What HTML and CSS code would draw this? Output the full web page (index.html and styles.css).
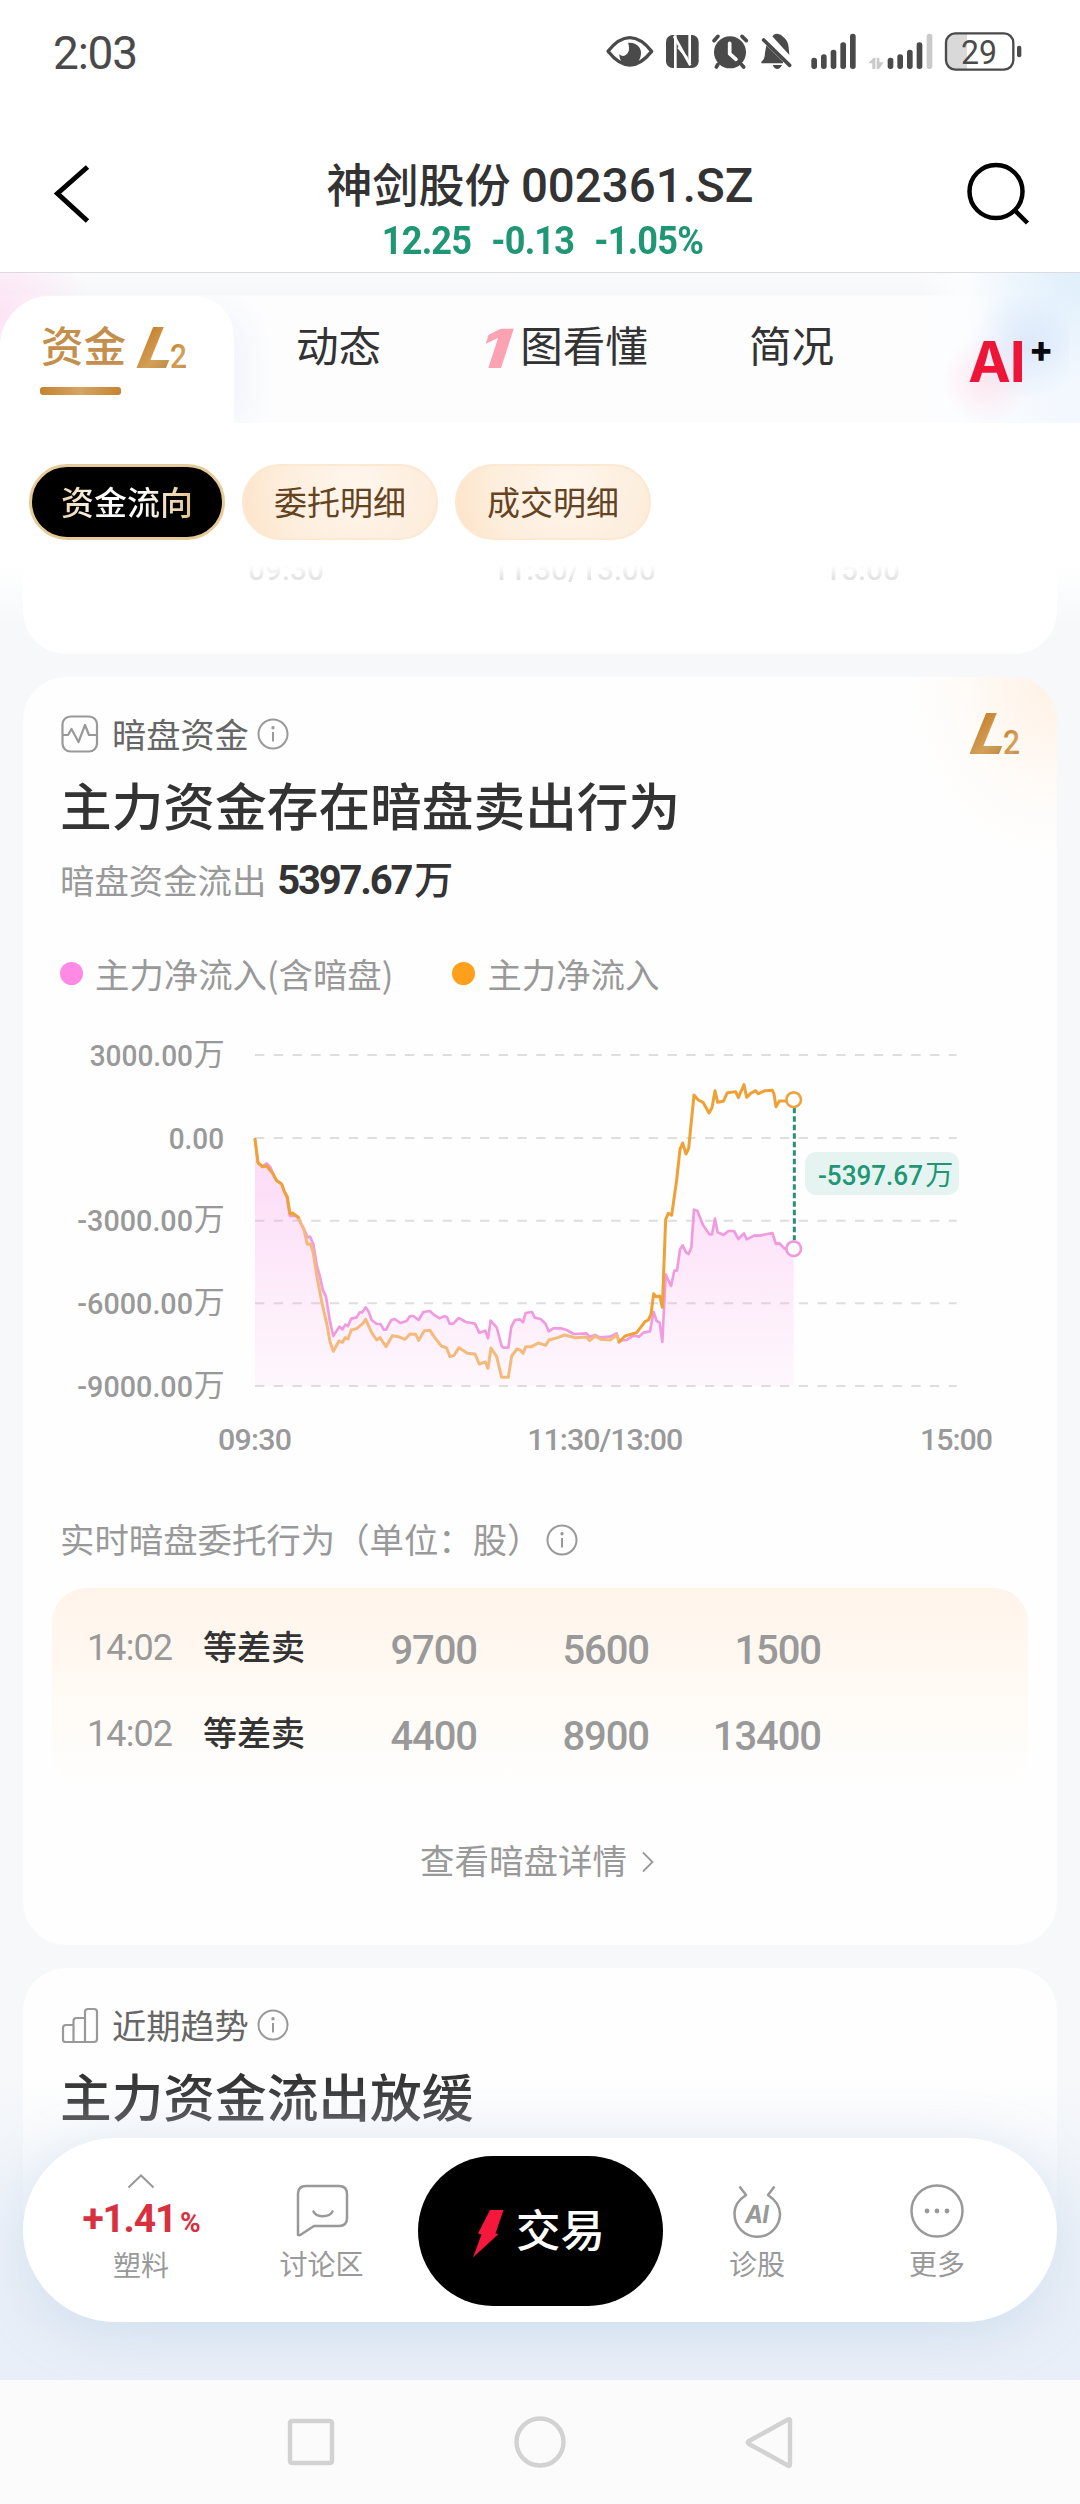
FILE: index.html
```html
<!DOCTYPE html>
<html lang="zh-CN">
<head>
<meta charset="utf-8">
<title>神剑股份 002361.SZ</title>
<link rel="stylesheet" href="styles.css">
</head>
<body>
<svg class="defs" width="0" height="0" aria-hidden="true">
  <defs>
    <linearGradient id="gold" x1="0" y1="0" x2="1" y2="1">
      <stop offset="0" stop-color="#c47a22"/><stop offset=".6" stop-color="#d3a05a"/><stop offset="1" stop-color="#b8843f"/>
    </linearGradient>
    <linearGradient id="area" x1="0" y1="358" x2="0" y2="1098" gradientUnits="userSpaceOnUse">
      <stop offset="0" stop-color="#f98be6" stop-opacity=".32"/><stop offset="1" stop-color="#f98be6" stop-opacity=".06"/>
    </linearGradient>
    <symbol id="l2" viewBox="0 0 54 44">
      <text class="l2-l" transform="translate(-2 42) skewX(-22)" x="0" y="0" textLength="35" lengthAdjust="spacingAndGlyphs" fill="url(#gold)">L</text>
      <text class="l2-2" x="35" y="42" textLength="17" lengthAdjust="spacingAndGlyphs" fill="url(#gold)">2</text>
    </symbol>
    <symbol id="info" viewBox="0 0 32 32">
      <circle cx="16" cy="16" r="14.5" fill="none" stroke="#999" stroke-width="2"/>
      <circle cx="16" cy="9.8" r="1.7" fill="#999"/><path d="M16 14v9.5" stroke="#999" stroke-width="2"/>
    </symbol>
  </defs>
</svg>

<div class="status">
  <span class="clock">2:03</span>
  <svg class="status-icons" viewBox="0 0 1560 270">
    <g fill="none" stroke="#4a4a4a" stroke-width="10">
      <path d="M144 124Q209 42 275 124Q209 206 144 124Z" stroke-linejoin="round"/>
      <g stroke-width="11" stroke-linecap="round"><path d="M462 92l12-13M559 92l-13-13M474 163l-5 8M544 163l7 8"/><path d="M611 90l78 76"/></g>
    </g>
    <g fill="#4a4a4a">
      <path d="M204 98C236 96 247 119 242 138C238 158 222 168 207 167C188 165 178 150 178 133Q188 142 198 134C209 126 209 112 204 98Z"/>
      <rect x="318" y="75" width="98" height="99" rx="20"/>
      <circle cx="510" cy="127" r="48"/>
      <path d="M637 79Q640 72 652 71Q664 73 669 80Q684 90 686 112L688 135ZM619 106L669 155V160H604V155Q614 150 615 128ZM638 165H666Q660 177 652 177Q643 177 638 165Z"/>
      <rect x="754" y="143" width="17" height="34" rx="8"/><rect x="783" y="133" width="17" height="44" rx="8"/><rect x="812" y="119" width="17" height="58" rx="8"/><rect x="841" y="97" width="17" height="80" rx="8"/><rect x="870" y="71" width="17" height="106" rx="8"/>
      <rect x="983" y="143" width="17" height="34" rx="8"/><rect x="1012" y="133" width="17" height="44" rx="8"/><rect x="1041" y="119" width="17" height="58" rx="8"/><rect x="1070" y="97" width="17" height="80" rx="8"/>
      <rect x="1371" y="107" width="13" height="35" rx="6"/>
    </g>
    <g fill="none" stroke="#fff">
      <path d="M346 176V76M389 160V74" stroke-width="8"/><path d="M342 78L391 166" stroke-width="8"/><path d="M354 112L382 144" stroke-width="6"/>
      <path d="M509 100V131L528 148" stroke-width="11" stroke-linecap="round"/>
    </g>
    <g fill="#cacaca"><rect x="1100" y="71" width="17" height="106" rx="8"/><path d="M925 160l16-17h5v34h-9v-17zM950 143h8v14h13l-14 20h-7z"/></g>
    <path d="M1161 90Q1163 72 1186 72H1221V177H1186Q1163 175 1161 155Z" fill="#d9d9d9"/>
    <rect x="1158" y="70" width="202" height="109" rx="28" fill="none" stroke="#4a4a4a" stroke-width="7"/>
    <text class="battery" x="1257" y="161" text-anchor="middle" textLength="108" lengthAdjust="spacingAndGlyphs">29</text>
  </svg>
</div>

<header class="header">
  <svg class="back" viewBox="0 0 44 60"><path d="M37.500 2L7.500 28.500L37.500 56" fill="none" stroke="#000" stroke-width="5"/></svg>
  <div class="heading">
    <h1>神剑股份 <b>002361.SZ</b></h1>
    <div class="quote"><span>12.25</span><span>-0.13</span><span>-1.05%</span></div>
  </div>
  <svg class="search" viewBox="0 0 66 66"><circle cx="29" cy="31.500" r="26.500" fill="none" stroke="#000" stroke-width="4.500"/><path d="M48 50.500L60.500 63" stroke="#000" stroke-width="4.500"/></svg>
</header>

<nav class="tabs">
  <div class="tab active"><span>资金</span><svg class="l2-tab"><use href="#l2"/></svg></div>
  <div class="tab t-news">动态</div>
  <div class="tab t-chart"><svg class="one" viewBox="0 0 34 44"><text class="one-text" transform="translate(-5 42) skewX(-18)" textLength="29" lengthAdjust="spacingAndGlyphs" fill="#fba3b2">1</text></svg>图看懂</div>
  <div class="tab t-brief">简况</div>
  <div class="ai"><span class="ai-word">AI</span><span class="ai-plus">+</span></div>
</nav>

<div class="chips">
  <div class="chip dark"><span>资金流向</span></div>
  <div class="chip">委托明细</div>
  <div class="chip">成交明细</div>
</div>

<main class="feed">
  <section class="prev-card">
    <div class="faded"><span>09:30</span><span>11:30/13:00</span><span>15:00</span></div>
  </section>

  <section class="card dark-pool">
    <svg class="l2-badge"><use href="#l2"/></svg>
    <div class="head">
      <svg class="head-icon" viewBox="0 0 38 38"><rect x="1.500" y="1.500" width="34.500" height="35" rx="8" fill="none" stroke="#999" stroke-width="2.200"/><path d="M2 20h5l3.500-6 7 13 6.500-17 4 10H36" fill="none" stroke="#999" stroke-width="2.200" stroke-linejoin="round"/></svg>
      <span>暗盘资金</span><svg class="info"><use href="#info"/></svg>
    </div>
    <h2>主力资金存在暗盘卖出行为</h2>
    <p class="sub">暗盘资金流出<b>5397.67</b><i>万</i></p>
    <div class="legend"><i class="dot pink"></i><span>主力净流入(含暗盘)</span><i class="dot orange"></i><span>主力净流入</span></div>

    <svg class="chart" viewBox="-510 0 2940 1320">
      <g stroke="#dedede" stroke-width="6" stroke-dasharray="28 28.250">
        <path d="M75 105H2180M75 354H2180M75 602H2180M75 850H2180M75 1098H2180"/>
      </g>
      <path fill="url(#area)" d="M75 358 84 428 97 440 110 430 120 440 137 478 155 492 170 530 180 588 200 588 222 627 233 652 240 650 250 672 260 735 270 770 278 808 288 830 300 905 310 948 318 935 328 920 337 928 346 914 354 918 364 896 380 892 389 877 397 877 407 862 416 875 425 900 440 912 452 912 461 929 468 929 484 900 494 897 511 909 530 903 540 888 550 888 566 900 580 876 600 873 610 883 629 895 645 888 652 893 659 911 670 911 686 894 708 906 735 911 748 938 766 932 774 955 782 902 800 922 815 978 820 983 835 983 844 920 855 900 870 898 879 907 887 879 906 876 914 893 932 897 947 912 956 934 970 925 992 925 1010 930 1031 942 1070 940 1078 950 1095 945 1110 952 1140 950 1160 940 1167 962 1190 960 1210 947 1227 950 1240 938 1260 934 1271 876 1280 903 1289 908 1297 966 1307 763 1323 798 1333 752 1341 752 1350 688 1358 676 1368 697 1376 702 1384 682 1392 569 1402 572 1419 615 1438 643 1446 643 1455 596 1463 637 1481 645 1495 633 1512 633 1525 657 1542 640 1550 658 1574 646 1590 647 1627 639 1638 672 1647 669 1665 687 1691 685V1098H75Z"/>
      <g fill="none" stroke-linejoin="round" stroke-linecap="round">
        <path stroke="#f09ae0" stroke-width="8" d="M75 358 84 428 97 440 110 430 120 440 137 478 155 492 170 530 180 588 200 588 222 627 233 652 240 650 250 672 260 735 270 770 278 808 288 830 300 905 310 948 318 935 328 920 337 928 346 914 354 918 364 896 380 892 389 877 397 877 407 862 416 875 425 900 440 912 452 912 461 929 468 929 484 900 494 897 511 909 530 903 540 888 550 888 566 900 580 876 600 873 610 883 629 895 645 888 652 893 659 911 670 911 686 894 708 906 735 911 748 938 766 932 774 955 782 902 800 922 815 978 820 983 835 983 844 920 855 900 870 898 879 907 887 879 906 876 914 893 932 897 947 912 956 934 970 925 992 925 1010 930 1031 942 1070 940 1078 950 1095 945 1110 952 1140 950 1160 940 1167 962 1190 960 1210 947 1227 950 1240 938 1260 934 1271 876 1280 903 1289 908 1297 966 1307 763 1323 798 1333 752 1341 752 1350 688 1358 676 1368 697 1376 702 1384 682 1392 569 1402 572 1419 615 1438 643 1446 643 1455 596 1463 637 1481 645 1495 633 1512 633 1525 657 1542 640 1550 658 1574 646 1590 647 1627 639 1638 672 1647 669 1665 687 1691 685"/>
        <path stroke="#f4ba7c" stroke-width="9" d="M205 592 222 630 232 673 242 672 250 700 260 765 275 845 290 910 300 965 310 994 327 963 337 967 346 953 354 957 364 930 380 926 398 911 407 898 425 938 440 960 450 953 468 980 487 947 505 950 525 958 540 942 557 943 566 961 583 932 600 931 612 950 634 978 650 984 660 1010 672 1006 687 983 712 1000 735 1002 748 1032 766 1026 774 1045 783 984 800 1010 815 1072 835 1072 845 1008 861 987 870 990 879 1000 887 980 905 980 925 969 947 976 957 960 985 952 1003 945 1035 953 1070 951 1079 962 1095 948 1113 958 1140 960 1160 945 1167 966"/>
        <path stroke="#f0a136" stroke-width="9" d="M75 358 84 428 97 440 110 438 128 460 140 482 155 492 163 515 172 530 180 582 188 579 205 592M1167 966 1185 948 1220 938 1245 905 1255 900 1263 883 1271 821 1278 830 1289 828 1297 862 1307 598 1315 580 1325 586 1340 480 1350 388 1358 369 1368 402 1376 385 1392 225 1405 240 1420 248 1437 279 1446 263 1455 212 1463 247 1480 244 1492 218 1517 215 1525 233 1542 194 1550 232 1562 220 1577 212 1585 221 1605 212 1627 211 1632 222 1638 260 1648 243 1665 243 1691 238"/>
      </g>
      <path d="M1693 263V660" stroke="#2b8f78" stroke-width="9" stroke-dasharray="17 8.500"/>
      <circle cx="1691" cy="239" r="22" fill="#fff" stroke="#eba43f" stroke-width="8"/>
      <circle cx="1691" cy="686" r="22" fill="#fff" stroke="#ee9ae0" stroke-width="8"/>
      <rect x="1725" y="396" width="462" height="129" rx="34" fill="#e5f4f1"/>
      <text class="axis tip" x="1764" y="495" textLength="315" lengthAdjust="spacingAndGlyphs">-5397.67</text><text class="wan tip" x="2086" y="495">万</text>
      <g class="axis">
        <text x="-421" y="137" textLength="310" lengthAdjust="spacingAndGlyphs">3000.00</text><text x="-184" y="386" textLength="166" lengthAdjust="spacingAndGlyphs">0.00</text>
        <text x="-458" y="633" textLength="347" lengthAdjust="spacingAndGlyphs">-3000.00</text><text x="-458" y="881" textLength="347" lengthAdjust="spacingAndGlyphs">-6000.00</text><text x="-458" y="1130" textLength="347" lengthAdjust="spacingAndGlyphs">-9000.00</text>
        <text x="-36" y="1289" textLength="222">09:30</text>
        <text x="892" y="1289" textLength="468">11:30/13:00</text>
        <text x="2070" y="1289" textLength="219">15:00</text>
      </g>
      <g class="wan"><text x="-109" y="135">万</text><text x="-109" y="631">万</text><text x="-109" y="879">万</text><text x="-109" y="1128">万</text></g>
    </svg>

    <div class="section-title">实时暗盘委托行为（单位：股）<svg class="info"><use href="#info"/></svg></div>
    <div class="orders">
      <div class="order"><time>14:02</time><strong>等差卖</strong><b>9700</b><b>5600</b><b>1500</b></div>
      <div class="order"><time>14:02</time><strong>等差卖</strong><b>4400</b><b>8900</b><b>13400</b></div>
    </div>
    <div class="more"><span>查看暗盘详情</span><svg viewBox="0 0 14 22"><path d="M2 1.500L11.500 11L2 20.500" fill="none" stroke="#999" stroke-width="1.800"/></svg></div>
  </section>

  <section class="card trend">
    <div class="head">
      <svg class="head-icon" viewBox="0 0 38 38"><path d="M2 34V22q0-3 3-3h7.500v17H5q-3 0-3-2zM12.500 36V15q0-3 3-3H24v24zM24 36V6q0-3 3-3h6q3 0 3 3v27q0 3-3 3z" fill="none" stroke="#999" stroke-width="2.200"/></svg>
      <span>近期趋势</span><svg class="info"><use href="#info"/></svg>
    </div>
    <h2>主力资金流出放缓</h2>
    <p class="sub">近5日</p>
  </section>

  <div class="haze"></div>

  <div class="dock">
    <div class="item sector"><svg class="up" viewBox="0 0 28 16"><path d="M1.500 14.500L14 2.500L26.500 14.500" fill="none" stroke="#999" stroke-width="2"/></svg><div class="change">+1.41<small>%</small></div><span>塑料</span></div>
    <div class="item forum"><svg class="glyph" viewBox="0 0 54 54"><path d="M3 51V10q0-8 8-8h33q8 0 8 8v24q0 8-8 8H19L6 50.500q-2 1.500-3-.500z" fill="none" stroke="#999" stroke-width="2.500" stroke-linejoin="round"/><path d="M18.500 27.500q2 4.500 9 4.800 8-.3 10-4.800" fill="none" stroke="#999" stroke-width="2.500" stroke-linecap="round"/></svg><span>讨论区</span></div>
    <div class="trade"><svg viewBox="0 0 32 48"><path d="M17 0H30.500L22.500 23.500L25.500 24L0 47.500L8.500 24.500L5 23.500Z" fill="#f5183a"/></svg>交易</div>
    <div class="item doctor"><svg class="glyph" viewBox="0 0 54 54"><path d="M9.500 2.500L16 11Q4 19 4.500 30A22.700 22.700 0 0 0 50 30Q50 19 38 11L44.500 2.500" fill="none" stroke="#999" stroke-width="2.500" stroke-linejoin="round"/><text class="ai-small" x="15" y="39" textLength="24">AI</text></svg><span>诊股</span></div>
    <div class="item others"><svg class="glyph" viewBox="0 0 54 54"><circle cx="27" cy="27" r="25.500" fill="none" stroke="#999" stroke-width="2.500"/><g fill="#999"><circle cx="17" cy="27" r="2.400"/><circle cx="27" cy="27" r="2.400"/><circle cx="37" cy="27" r="2.400"/></g></svg><span>更多</span></div>
  </div>
</main>

<footer class="sysnav">
  <svg viewBox="0 0 52 52"><rect x="5" y="5" width="42" height="42" rx="2"/></svg>
  <svg viewBox="0 0 52 52"><circle cx="26" cy="26" r="23.500"/></svg>
  <svg viewBox="0 0 52 52"><path d="M45 3.500Q47 2.500 47 5V48Q47 50.500 45 49.500L6 28Q3.500 26.500 6 25Z"/></svg>
</footer>
</body>
</html>
```
FILE: styles.css
```css
* { box-sizing: border-box; margin: 0; padding: 0; }
body {
  width: 1080px; height: 2504px; overflow: hidden;
  display: flex; flex-direction: column;
  background: #fff; color: #333;
  font-family: "Noto Sans CJK SC", sans-serif;
}
svg { display: block; flex: none; overflow: visible; }
.defs { position: absolute; }

.status { height: 105px; display: flex; justify-content: space-between; align-items: flex-start; padding-left: 53px; }
.clock { font: 400 46px/60px Roboto, sans-serif; letter-spacing: -1.200px; color: #4a4a4a; margin-top: 23px; }
.status-icons { width: 520px; height: 90px; margin-top: 10px; }
.battery { font: 400 101px Roboto, sans-serif; fill: #4a4a4a; }

.header { height: 168px; display: flex; justify-content: space-between; padding: 0 47px 0 50px; border-bottom: 1px solid #dcdce0; }
.back { width: 44px; height: 60px; margin-top: 60px; }
.search { width: 66px; height: 66px; margin-top: 55px; }
.heading { text-align: center; padding: 45px 0 0 19px; }
h1 { font-size: 46px; line-height: 64px; font-weight: 500; white-space: pre; }
h1 b { font: 500 47.500px/64px Roboto, sans-serif; }
.quote { display: flex; justify-content: center; gap: 21px; font: 700 38px/44px Roboto, sans-serif; letter-spacing: -.800px; color: #1f9674; margin: 1px -4px 0 0; transform: scaleX(.95); }

.tabs {
  height: 150px; display: flex; align-items: flex-start; padding-top: 23px; flex: none;
  font-size: 42.600px; line-height: 60px;
  background:
    radial-gradient(circle at 0 40px, #fde3f5 0, rgba(253,227,245,0) 90px),
    radial-gradient(circle at 1080px 0, #dfeffb 0, rgba(223,239,251,0) 110px),
    linear-gradient(90deg, rgba(255,255,255,0) 920px, rgba(252,253,255,.9) 960px, #f3f8fe 1060px),
    linear-gradient(180deg, #fbfbfc 0, #f5f7f9 22px, #fdfdfe 23px, #fdfdfe 100%);
}
.tab { height: 127px; padding-top: 18px; display: flex; color: #333; }
.tab.active {
  position: relative; width: 234px; padding-left: 41px; color: #c48e4c; font-weight: 500;
  background: #fff; border-radius: 50px 40px 0 0; box-shadow: 22px 6px 30px -6px #f3f5fb; clip-path: inset(0 -80px 0 0);
}
.tab.active::after { content: ""; position: absolute; left: 40px; top: 91px; width: 81px; height: 8px; border-radius: 3px; background: linear-gradient(90deg, #c5832f, #d6a464 50%, #c5832f); }
.l2-tab { width: 54px; height: 44px; margin: 12px 0 0 9px; }
.l2-l { font: 800 56.500px Inter, sans-serif; }
.l2-2 { font: 500 34px Roboto, sans-serif; }
.t-news { margin-left: 62px; }
.t-chart { margin-left: 99px; }
.one { width: 34px; height: 44px; margin: 12px 6px 0 0; }
.one-text { font: 900 54px Inter, sans-serif; }
.t-brief { margin-left: 101px; }
.ai { display: flex; margin-left: 104px; padding: 0 16px 0 30px; height: 127px; background: radial-gradient(circle at 48px 84px, rgba(255,205,222,.45) 0, rgba(255,205,222,0) 44px), radial-gradient(circle at 88px 50px, rgba(208,224,250,.65) 0, rgba(208,224,250,0) 56px); }
.ai-word { font: 700 57px/72px Inter, sans-serif; letter-spacing: -1px; color: #ee1638; margin-top: 30px; }
.ai-plus { font: 800 36px/40px Inter, sans-serif; color: #08080f; margin: 33px 0 0 4px; }

.chips { height: 142px; flex: none; padding: 41px 0 0 29px; display: flex; gap: 17px; background: #fff; }
.chip {
  width: 196px; height: 76px; border-radius: 38px; text-align: center; font-size: 33px; line-height: 70px; color: #66431f;
  background: radial-gradient(circle at 58% 30%, #fff6ed 0, #fdeedd 60%, #fde3c8 100%); border: 2px solid #fde8d2;
}
.chip.dark { background: #000; border: 3px solid #e6cb98; font-weight: 500; line-height: 68px; }
.chip.dark span { background: linear-gradient(90deg, #ecd6ae, #fff 35%, #fff 60%, #e3c188); background-clip: text; -webkit-background-clip: text; color: transparent; }

.feed { position: relative; height: 1815px; flex: none; overflow: hidden; padding: 0 23px; background: linear-gradient(180deg, #fff 0, #f6f8fa 62px, #f6f8fa 100%); }
.prev-card { height: 89px; border-radius: 0 0 43px 43px; background: #fff; overflow: hidden; }
.faded {
  width: 652px; height: 20px; display: flex; justify-content: space-between; margin-left: 225px; overflow: hidden;
  font: 500 30px/31px Roboto, sans-serif; color: #e2e2e2; -webkit-mask: linear-gradient(transparent, #000 14px);
  mask: linear-gradient(transparent, #000 14px);
}
.faded span { margin-top: -11px; }

.card { margin-top: 23px; border-radius: 43px; background: #fefefe; padding: 38px 38px 65px; position: relative; }
.dark-pool { height: 1268px; background: radial-gradient(ellipse at 100% 0, #fff1e4 0, rgba(255,250,245,.6) 100px, rgba(255,255,255,0) 150px), #fefefe; }
.l2-badge { position: absolute; right: 35px; top: 35px; width: 54px; height: 44px; }
.head { height: 38px; display: flex; align-items: center; font-size: 34.200px; line-height: 38px; color: #666; }
.head-icon { width: 38px; height: 38px; margin-right: 13px; }
.head span { margin-top: -2px; }
.head .info { margin-left: 8px; }
.info { width: 32px; height: 32px; }
h2 { margin: 21px 0 0 -1px; font-size: 51.700px; line-height: 60px; font-weight: 500; }
.sub { margin: 21px 0 0 -1px; height: 44px; display: flex; align-items: baseline; font-size: 34.400px; line-height: 44px; color: #999; }
.sub b { font: 700 40px/44px Roboto, sans-serif; letter-spacing: -2.200px; color: #333; margin-left: 11px; }
.sub i { font-style: normal; font-weight: 500; font-size: 39px; color: #333; margin-left: 3px; }
.legend { margin-top: 54px; height: 40px; display: flex; align-items: center; font-size: 34.400px; line-height: 40px; color: #999; }
.dot { width: 23px; height: 23px; border-radius: 50%; margin: 0 12px 0 59px; }
.dot:first-child { margin-left: -1px; }
.pink { background: #ff8ae6; }
.orange { background: #ffa01c; }
.chart { width: 980px; height: 440px; margin: 27px 0 0 -1px; }
.axis { font: 500 91px Roboto, sans-serif; fill: #999; }
.wan { font-size: 93px; fill: #999; }
.axis.tip { font-size: 84px; fill: #1f9674; }
.wan.tip { font-size: 84px; fill: #1f9674; }
.section-title { margin: 58px 0 0 -1px; height: 40px; display: flex; align-items: center; font-size: 34.400px; line-height: 40px; color: #999; }
.section-title .info { margin: 4px 0 0 5px; }
.orders { margin: 30px -9px 0 -9px; height: 201px; border-radius: 34px; padding-top: 15px; background: linear-gradient(180deg, #fff4ea 0, #fffaf4 50%, #fefefe 100%); }
.order { height: 86px; display: grid; grid-template-columns: 116px 130px 144px 172px 172px; padding-left: 35px; line-height: 86px; }
.order time { font: 400 36px/90px Roboto, sans-serif; letter-spacing: -.900px; color: #999; }
.order strong { font-size: 34px; font-weight: 500; }
.order b { font: 500 40px/96px Roboto, sans-serif; letter-spacing: -1.100px; color: #999; text-align: right; }
.more { margin-top: 51px; height: 40px; display: flex; align-items: center; font-size: 34.500px; line-height: 40px; color: #999; padding-left: 359px; }
.more span { margin-top: -3px; }
.more svg { width: 14px; height: 22px; margin: 3px 0 0 14px; }

.trend { height: 400px; border-bottom-left-radius: 0; border-bottom-right-radius: 0; }
.haze { position: absolute; left: 0; top: 1515px; width: 1080px; height: 300px; background: linear-gradient(180deg, rgba(233,239,248,0) 0, rgba(233,239,248,.45) 30%, #e9eff8 80%, #e9eff8 100%); }
.dock {
  position: absolute; left: 23px; top: 1573px; width: 1034px; height: 184px; border-radius: 92px; background: #fff;
  box-shadow: 0 10px 56px rgba(130,175,210,.26); display: flex;
}
.item { display: flex; flex-direction: column; align-items: center; font-size: 28px; line-height: 34px; color: #999; width: 180px; }
.item span { margin-top: 8px; }
.sector { margin-left: 28px; padding-top: 35px; }
.up { width: 28px; height: 16px; }
.change { font: 700 39px/44px Roboto, sans-serif; letter-spacing: -1.200px; color: #d8303f; margin-top: 8px; white-space: nowrap; }
.change small { font-size: 28px; margin-left: 4px; }
.sector span { margin-top: 2px; }
.forum { padding-top: 46px; width: 181px; }
.glyph { width: 54px; height: 54px; }
.forum, .doctor, .others { padding-top: 46px; }
.trade { margin: 18px 0 0 6px; width: 245px; height: 150px; border-radius: 75px; background: #000; color: #fff; font-size: 44.500px; font-weight: 500; line-height: 144px; display: flex; padding-left: 55px; }
.trade svg { width: 32px; height: 48px; margin: 54px 11px 0 0; }
.doctor { margin-left: 4px; }
.ai-small { font: italic 700 24px Inter, sans-serif; fill: #999; }

.sysnav { height: 124px; flex: none; background: #fbfbfb; display: flex; justify-content: center; gap: 177px; padding-top: 36px; }
.sysnav svg { width: 52px; height: 52px; fill: none; stroke: #d2d2d2; stroke-width: 4.500px; }
```
